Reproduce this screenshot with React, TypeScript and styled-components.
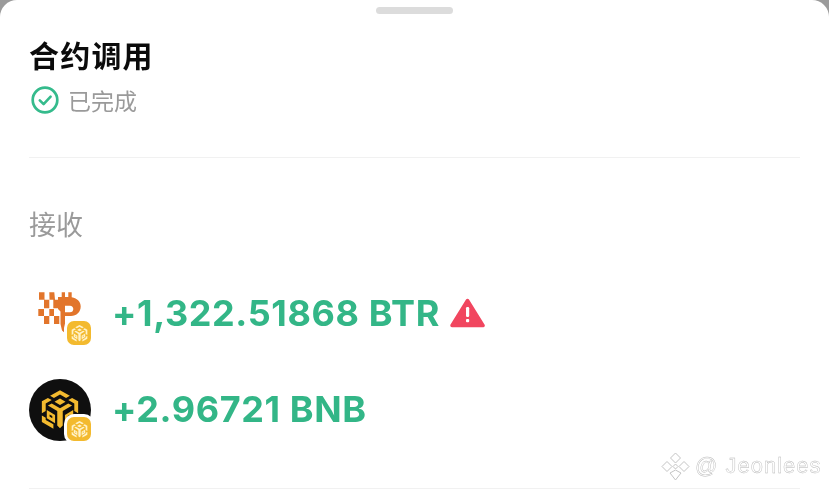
import React from 'react';
import styled, { createGlobalStyle } from 'styled-components';

const Global = createGlobalStyle`
  html, body { margin: 0; padding: 0; background: #9b9b9b; }
  body { width: 829px; height: 492px; overflow: hidden; font-family: "Noto Sans CJK SC", "Noto Sans", sans-serif; }
`;
const Sheet = styled.main`
  position: relative; box-sizing: border-box; width: 829px; height: 492px;
  background: #fff; border-radius: 17px 17px 0 0; padding: 7px 29px 0; overflow: hidden;
  display: flex; flex-direction: column; filter: blur(0.5px);
`;
const Handle = styled.div`
  width: 77px; height: 7px; border-radius: 4px; background: #dcdcdc; align-self: center; flex: none;
`;
const Title = styled.h1`
  margin: 18px 0 0; font-size: 30px; line-height: 44px; font-weight: 700; color: #0b0b0b; letter-spacing: 1.2px;
`;
const StatusRow = styled.div`
  display: flex; align-items: center; gap: 9px; margin-top: 8px; padding-left: 2px; height: 32px;
`;
const StatusText = styled.span`
  font-size: 23px; line-height: 32px; color: #9a9a9a;
`;
const Divider = styled.hr<{ $top: number }>`
  border: 0; height: 1px; background: #f1f1f1; margin: ${p => p.$top}px 0 0; flex: none; width: 771px;
`;
const Section = styled.div`
  font-size: 27px; line-height: 40px; color: #9a9a9a; margin-top: 46px;
`;
const TokenRow = styled.div<{ $top: number }>`
  display: flex; align-items: center; gap: 21px; height: 62px; margin-top: ${p => p.$top}px;
`;
const Avatar = styled.div`
  position: relative; width: 62px; height: 62px; flex: none;
`;
const PixelAvatar = styled(Avatar)`
  display: flex; align-items: flex-start; justify-content: flex-start; padding: 8px 0 0 8px; box-sizing: border-box;
`;
const BnbAvatar = styled(Avatar)`
  background: #0f0f0f; border-radius: 50%; display: flex; align-items: center; justify-content: center;
`;
const Badge = styled.div`
  position: absolute; right: -2px; bottom: -2px; width: 28px; height: 28px; box-sizing: border-box;
  border: 2px solid #fff; border-radius: 9px; background: #f3ba2f; box-shadow: 0 0 0 1px #fff;
  display: flex; align-items: center; justify-content: center;
`;
const Amount = styled.span`
  font-family: Inter, "Liberation Sans", sans-serif; font-weight: 700; font-size: 36px; line-height: 38px; color: #33b687;
  letter-spacing: .6px; word-spacing: 0;
  display: inline-flex; align-items: center; gap: 10px; white-space: nowrap; padding-bottom: 2px;
`;
const Watermark = styled.div`
  position: absolute; left: 660px; top: 449px; display: flex; align-items: center; gap: 4px;
  color: #fff; font-family: "Liberation Sans", sans-serif; font-size: 22px; line-height: 34px; letter-spacing: 1px;
  -webkit-text-stroke: .4px #b5b5b5;
`;

const Check = () => (
  <svg width="28" height="28" viewBox="0 0 28 28" fill="none">
    <circle cx="14" cy="14" r="12.3" stroke="#35bb8c" strokeWidth="2.7" />
    <path d="M8.8 14.3l3.8 3.8 7-7.4" stroke="#35bb8c" strokeWidth="2.6" strokeLinecap="round" strokeLinejoin="round" />
  </svg>
);
const Warn = () => (
  <svg width="35" height="30" viewBox="0 0 35 30">
    <path d="M17.5 2.5L33 27.5H2z" fill="#f1465f" stroke="#f1465f" strokeWidth="3.5" strokeLinejoin="round" />
    <rect x="16" y="9" width="3.2" height="10" rx="1.2" fill="#fff" />
    <rect x="16" y="21" width="3.2" height="3.2" rx="1" fill="#fff" />
  </svg>
);
const Cube = ({ size, color }: { size: number; color: string }) => (
  <svg width={size} height={size} viewBox="0 0 40 40" fill={color}>
    <path d="M20 2L29 7 25.500 9 20 6 14.500 9 11 7z" />
    <path d="M20 9.500L25 12.500 20 15.500 15 12.500z" />
    <path d="M9 9L12.500 11 7 14V21L3.500 23V12zM31 9L27.500 11 33 14V21L36.500 23V12z" />
    <path d="M9 16L12.500 14 20 18.500 27.500 14 31 16 22.500 21V34L20 36.500 17.500 34V21z" />
    <path fillRule="evenodd" d="M8 20L15.500 24.500V32L8 27.500zM10.500 24V26L13 27.500V25.500zM32 20L24.500 24.500V32L32 27.500zM29.500 24V26L27 27.500V25.500z" />
    <path d="M3.500 25L7 27V29L14 33V37L3.500 31zM36.500 25L33 27V29L26 33V37L36.500 31z" />
  </svg>
);
const Pixel = () => (
  <svg width="46" height="44" viewBox="0 0 46 44" fill="#e2752b">
    <path d="M2 1.300h5.500v7.400H2zM12.300 1.300h5l.7 7.400h-5.500zM7 8.700h5.300v8.600H7zM16.300 8.700h5.400v8.600h-5.400zM1.300 18H7v7H1.300zM12.300 18H17v7h-4.700zM7 25h5.300v8H7zM17 25h5.300v8H17z" />
    <path fillRule="evenodd" d="M24.700 1.300H28V6h3.300V1.300h3.400V6.200C40.500 7.500 43.700 10.500 43.700 15.500 43.700 21 39.500 25 34 25H28V33L30.500 36 28.500 38.500 29 43 25 39.500 23.500 33V20.500L21 18V6H24.700zM28 14.700V21.300H33C35 21.300 36.300 20 36.300 18S35 14.700 33 14.700z" />
  </svg>
);

export default function App() {
  return (
    <>
      <Global />
      <Sheet>
        <Handle />
        <Title>合约调用</Title>
        <StatusRow><Check /><StatusText>已完成</StatusText></StatusRow>
        <Divider $top={41} />
        <Section>接收</Section>
        <TokenRow $top={39}>
          <PixelAvatar>
            <Pixel />
            <Badge><Cube size={19} color="#fff2c9" /></Badge>
          </PixelAvatar>
          <Amount>+1,322.51868 BTR <Warn /></Amount>
        </TokenRow>
        <TokenRow $top={34}>
          <BnbAvatar>
            <Cube size={44} color="#f3ba2f" />
            <Badge><Cube size={19} color="#fff2c9" /></Badge>
          </BnbAvatar>
          <Amount>+2.96721 BNB</Amount>
        </TokenRow>
        <Divider $top={47} />
        <Watermark>
          <svg width="31" height="31" viewBox="0 0 31 31" fill="#fff" stroke="#c4c4c4" strokeWidth="1">
            <path d="M15.500 2l5 5-5 5-5-5zM7 10.500l5 5-5 5-5-5zM24 10.500l5 5-5 5-5-5zM15.500 13l2.500 2.500-2.500 2.500-2.500-2.500zM10 22l5.500 7 5.500-7-5.500 -3z" />
          </svg>
          <span>@ Jeonlees</span>
        </Watermark>
      </Sheet>
    </>
  );
}
